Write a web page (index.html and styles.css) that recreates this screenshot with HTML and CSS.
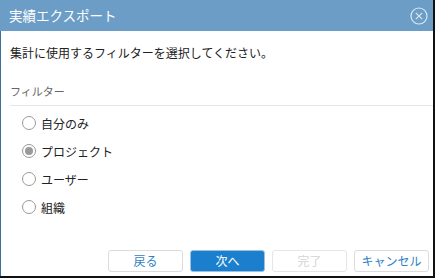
FILE: index.html
```html
<!DOCTYPE html>
<html lang="ja">
<head>
<meta charset="utf-8">
<link rel="stylesheet" href="styles.css">
</head>
<body>
<div class="dialog">
  <div class="header">
    <span class="title">実績エクスポート</span>
    <svg class="close" width="18" height="18" viewBox="0 0 18 18">
      <circle cx="9" cy="9" r="8" fill="none" stroke="#dce8f3" stroke-width="1.2"/>
      <path d="M5.8 5.8 L12.2 12.2 M12.2 5.8 L5.8 12.2" stroke="#dce8f3" stroke-width="1.2"/>
    </svg>
  </div>
  <div class="content">
    <p class="intro">集計に使用するフィルターを選択してください。</p>
    <div class="label">フィルター</div>
    <div class="options">
      <div class="opt"><span class="radio"></span>自分のみ</div>
      <div class="opt"><span class="radio checked"></span>プロジェクト</div>
      <div class="opt"><span class="radio"></span>ユーザー</div>
      <div class="opt"><span class="radio"></span>組織</div>
    </div>
  </div>
  <div class="footer">
    <button class="btn">戻る</button>
    <button class="btn primary">次へ</button>
    <button class="btn disabled">完了</button>
    <button class="btn">キャンセル</button>
  </div>
</div>
</body>
</html>
```
FILE: styles.css
```css
html, body {
  margin: 0;
  padding: 0;
  background: #111;
  width: 435px;
  height: 278px;
  overflow: hidden;
}
.dialog {
  width: 432px;
  height: 276px;
  background: #fff;
  border-left: 1px solid #3d6f9c;
  display: flex;
  flex-direction: column;
  font-family: "Noto Sans CJK JP", "Noto Sans", sans-serif;
}
.header {
  height: 31px;
  background: #6b9dc6;
  display: flex;
  align-items: center;
  justify-content: space-between;
  padding: 0 5px 0 9px;
  margin-left: -1px;
}
.title {
  color: #fff;
  font-size: 13.5px;
  line-height: 31px;
}
.close {
  display: block;
}
.content {
  flex: 1;
  padding: 0 0 0 9px;
}
.intro {
  margin: 13px 0 0 0;
  font-size: 12px;
  line-height: 18px;
  color: #222;
}
.label {
  margin-top: 21px;
  font-size: 11px;
  line-height: 16px;
  color: #666;
  padding-bottom: 6px;
  border-bottom: 1px solid #e6e6e6;
}
.options {
  padding: 3px 0 0 12px;
  display: flex;
  flex-direction: column;
}
.opt {
  height: 28px;
  display: flex;
  align-items: center;
  font-size: 12px;
  color: #222;
}
.radio {
  width: 14px;
  height: 14px;
  border: 1px solid #999;
  border-radius: 50%;
  margin-right: 5px;
  box-sizing: border-box;
  display: flex;
  align-items: center;
  justify-content: center;
}
.radio.checked::after {
  content: "";
  width: 8px;
  height: 8px;
  border-radius: 50%;
  background: #9a9a9a;
}
.footer {
  display: flex;
  justify-content: flex-end;
  gap: 7px;
  padding: 0 4px 4px 0;
}
.btn {
  width: 75px;
  height: 22px;
  border: 1px solid #dcdcdc;
  border-radius: 3px;
  background: #fff;
  color: #2f7fc8;
  font-family: "Noto Sans CJK JP", "Noto Sans", sans-serif;
  font-size: 12px;
  padding: 0;
  line-height: 20px;
}
.btn.primary {
  background: #1b7fcd;
  border-color: #9cc2e3;
  color: #fff;
}
.btn.disabled {
  color: #d4d4d4;
  border-color: #e6e6e6;
}
```
